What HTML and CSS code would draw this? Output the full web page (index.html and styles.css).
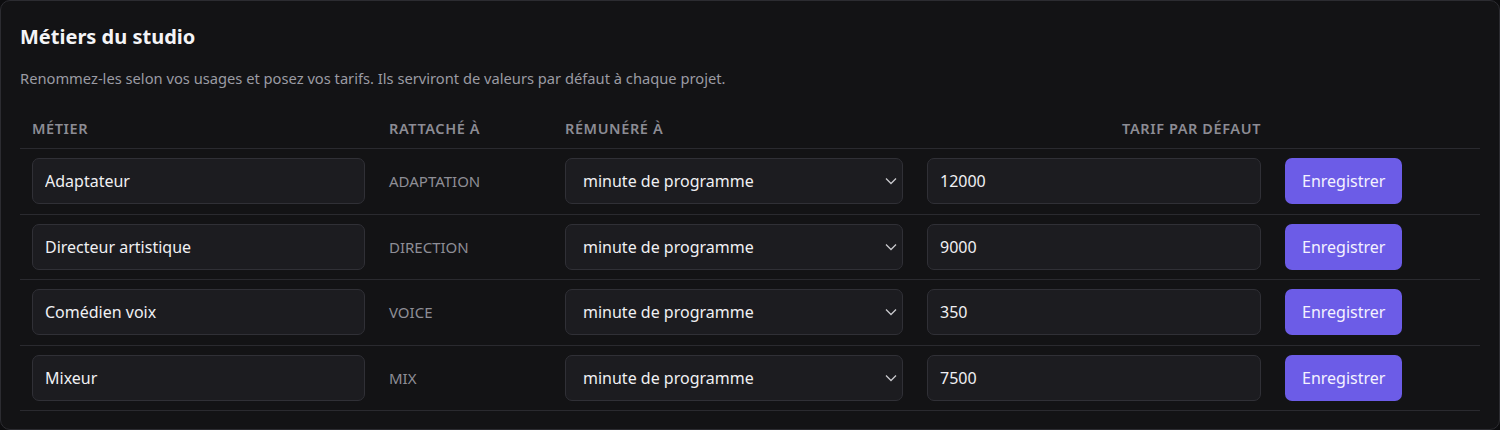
FILE: index.html
```html
<!DOCTYPE html>
<html lang="fr">
<head>
<meta charset="utf-8">
<link rel="stylesheet" href="styles.css">
</head>
<body>
<section class="card">
  <h2 class="title">Métiers du studio</h2>
  <p class="subtitle">Renommez-les selon vos usages et posez vos tarifs. Ils serviront de valeurs par défaut à chaque projet.</p>
  <table class="grid">
    <thead>
      <tr>
        <th class="c-name">Métier</th>
        <th class="c-cat">Rattaché à</th>
        <th class="c-unit">Rémunéré à</th>
        <th class="c-rate">Tarif par défaut</th>
        <th class="c-act"></th>
      </tr>
    </thead>
    <tbody>
      <tr>
        <td><input class="field" value="Adaptateur"></td>
        <td class="cat">ADAPTATION</td>
        <td><div class="select"><span>minute de programme</span><svg viewBox="0 0 12 8" width="12" height="8"><path d="M1 1.5 6 6.5 11 1.5" fill="none" stroke="#c8c8cc" stroke-width="1.3"/></svg></div></td>
        <td><input class="field" value="12000"></td>
        <td><button class="btn">Enregistrer</button></td>
      </tr>
      <tr>
        <td><input class="field" value="Directeur artistique"></td>
        <td class="cat">DIRECTION</td>
        <td><div class="select"><span>minute de programme</span><svg viewBox="0 0 12 8" width="12" height="8"><path d="M1 1.5 6 6.5 11 1.5" fill="none" stroke="#c8c8cc" stroke-width="1.3"/></svg></div></td>
        <td><input class="field" value="9000"></td>
        <td><button class="btn">Enregistrer</button></td>
      </tr>
      <tr>
        <td><input class="field" value="Comédien voix"></td>
        <td class="cat">VOICE</td>
        <td><div class="select"><span>minute de programme</span><svg viewBox="0 0 12 8" width="12" height="8"><path d="M1 1.5 6 6.5 11 1.5" fill="none" stroke="#c8c8cc" stroke-width="1.3"/></svg></div></td>
        <td><input class="field" value="350"></td>
        <td><button class="btn">Enregistrer</button></td>
      </tr>
      <tr>
        <td><input class="field" value="Mixeur"></td>
        <td class="cat">MIX</td>
        <td><div class="select"><span>minute de programme</span><svg viewBox="0 0 12 8" width="12" height="8"><path d="M1 1.5 6 6.5 11 1.5" fill="none" stroke="#c8c8cc" stroke-width="1.3"/></svg></div></td>
        <td><input class="field" value="7500"></td>
        <td><button class="btn">Enregistrer</button></td>
      </tr>
    </tbody>
  </table>
</section>
</body>
</html>
```
FILE: styles.css
```css
* { box-sizing: border-box; }
html, body { margin: 0; background: #0d0d0f; }
body { font-family: "Noto Sans", "Open Sans", sans-serif; color: #ececf0; }
.card {
  width: 1500px;
  height: 430px;
  background: #131315;
  border: 1px solid #2c2c31;
  border-radius: 10px;
  padding: 19px 19px;
}
.title {
  margin: 0;
  font-size: 20px;
  font-weight: 700;
  line-height: 34px;
  color: #f4f4f6;
}
.subtitle {
  margin: 7px 0 0;
  font-size: 14.7px;
  line-height: 34px;
  color: #9b9ba3;
}
.grid {
  width: 100%;
  border-collapse: collapse;
  table-layout: fixed;
  margin-top: 15px;
}
.grid th {
  text-align: left;
  text-transform: uppercase;
  font-size: 14.5px;
  line-height: 20px;
  font-weight: 600;
  letter-spacing: 0.6px;
  color: #8c8c94;
  padding: 8px 12px 10px;
  border-bottom: 1px solid #2a2a2f;
}
.grid th.c-name { width: 357px; }
.grid th.c-cat { width: 176px; }
.grid th.c-unit { width: 362px; }
.grid th.c-rate { width: 358px; text-align: right; }
.grid td {
  padding: 9px 12px 9px;
  border-bottom: 1px solid #2a2a2f;
  height: 65.5px;
  vertical-align: middle;
}
.field, .select {
  width: 100%;
  height: 46px;
  background: #1c1c20;
  border: 1px solid #303036;
  border-radius: 7px;
  color: #f0f0f3;
  font-family: inherit;
  font-size: 16px;
  padding: 0 12px;
  outline: none;
}
.select {
  display: flex;
  align-items: center;
  justify-content: space-between;
  padding: 0 5px 0 17px;
}
.cat {
  font-size: 15px;
  color: #8e8e96;
}
.btn {
  height: 46px;
  padding: 0 17px;
  border: none;
  border-radius: 7px;
  background: #6c5ce7;
  color: #f4f2ff;
  font-family: inherit;
  font-size: 16px;
}
```
